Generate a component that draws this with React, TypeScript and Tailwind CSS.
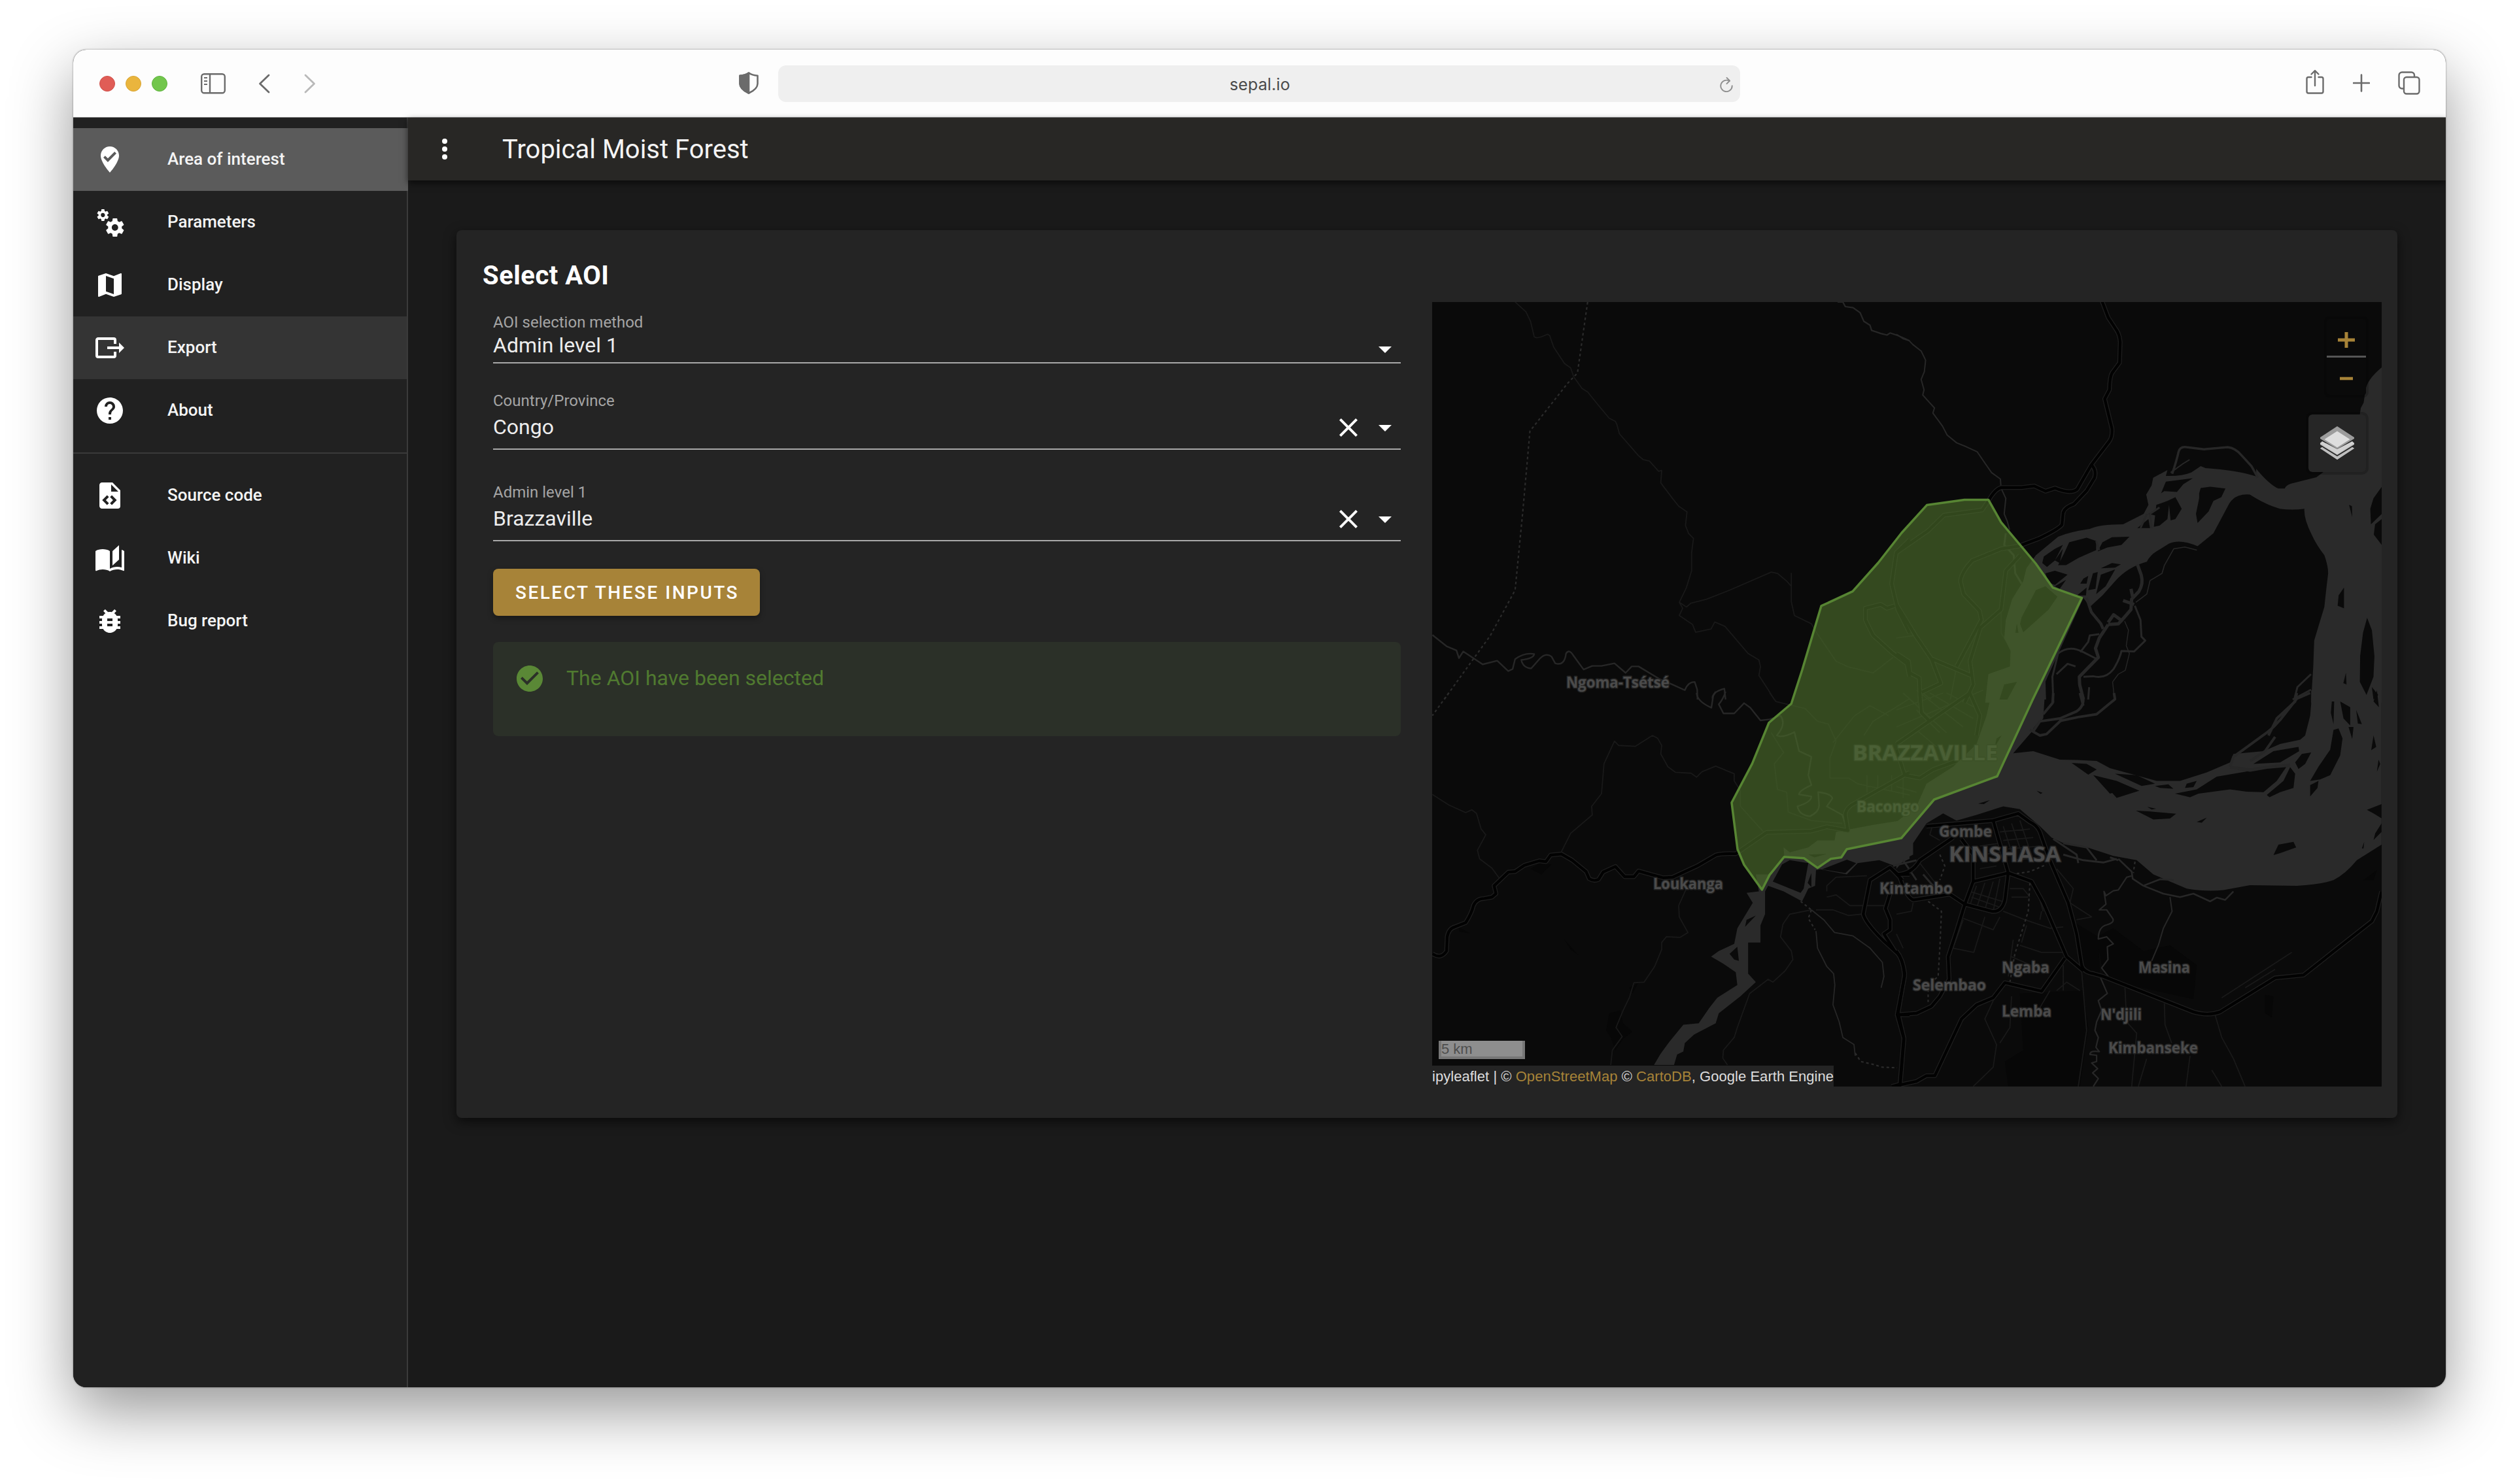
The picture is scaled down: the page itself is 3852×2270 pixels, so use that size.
import React from "react";

const ICONS = {
  marker:
    "M12,2C15.86,2 19,5.14 19,9C19,14.25 12,22 12,22C12,22 5,14.25 5,9C5,5.14 8.14,2 12,2M10.47,14L17,7.41L15.6,6L10.47,11.18L8.4,9.09L7,10.5L10.47,14Z",
  cogs:
    "M15.9,18.45C17.25,18.45 18.35,17.35 18.35,16C18.35,14.65 17.25,13.55 15.9,13.55C14.54,13.55 13.45,14.65 13.45,16C13.45,17.35 14.54,18.45 15.9,18.45M21.1,16.68L22.58,17.84C22.71,17.95 22.75,18.13 22.66,18.29L21.26,20.71C21.17,20.86 21,20.92 20.83,20.86L19.09,20.16C18.73,20.44 18.33,20.67 17.91,20.85L17.64,22.7C17.62,22.87 17.47,23 17.3,23H14.5C14.32,23 14.18,22.87 14.15,22.7L13.89,20.85C13.46,20.67 13.07,20.44 12.71,20.16L10.96,20.86C10.81,20.92 10.62,20.86 10.54,20.71L9.14,18.29C9.05,18.13 9.09,17.95 9.22,17.84L10.7,16.68L10.65,16L10.7,15.31L9.22,14.16C9.09,14.05 9.05,13.86 9.14,13.71L10.54,11.29C10.62,11.13 10.81,11.07 10.96,11.13L12.71,11.84C13.07,11.56 13.46,11.32 13.89,11.15L14.15,9.29C14.18,9.13 14.32,9 14.5,9H17.3C17.47,9 17.62,9.13 17.64,9.29L17.91,11.15C18.33,11.32 18.73,11.56 19.09,11.84L20.83,11.13C21,11.07 21.17,11.13 21.26,11.29L22.66,13.71C22.75,13.86 22.71,14.05 22.58,14.16L21.1,15.31L21.15,16L21.1,16.68M6.69,8.07C7.56,8.07 8.26,7.37 8.26,6.5C8.26,5.63 7.56,4.92 6.69,4.92A1.58,1.58 0 0,0 5.11,6.5C5.11,7.37 5.82,8.07 6.69,8.07M10.03,6.94L11,7.68C11.07,7.75 11.09,7.87 11.03,7.97L10.13,9.53C10.08,9.63 9.96,9.67 9.86,9.63L8.74,9.18L8,9.62L7.81,10.81C7.79,10.92 7.7,11 7.59,11H5.79C5.67,11 5.58,10.92 5.56,10.81L5.4,9.62L4.64,9.18L3.52,9.63C3.41,9.67 3.3,9.63 3.24,9.53L2.34,7.97C2.28,7.87 2.31,7.75 2.39,7.68L3.34,6.94L3.31,6.5L3.34,6.06L2.39,5.32C2.31,5.25 2.28,5.13 2.34,5.03L3.24,3.47C3.3,3.37 3.41,3.33 3.52,3.37L4.63,3.82L5.4,3.38L5.56,2.19C5.58,2.08 5.67,2 5.79,2H7.59C7.7,2 7.79,2.08 7.81,2.19L8,3.38L8.74,3.82L9.86,3.37C9.96,3.33 10.08,3.37 10.13,3.47L11.03,5.03C11.09,5.13 11.07,5.25 11,5.32L10.03,6.06L10.06,6.5L10.03,6.94Z",
  map: "M15,19L9,16.89V5L15,7.11M20.5,3C20.44,3 20.39,3 20.34,3L15,5.1L9,3L3.36,4.9C3.15,4.97 3,5.15 3,5.38V20.5A0.5,0.5 0 0,0 3.5,21C3.55,21 3.61,21 3.66,20.97L9,18.9L15,21L20.64,19.1C20.85,19 21,18.85 21,18.62V3.5A0.5,0.5 0 0,0 20.5,3Z",
  exportIcon:
    "M23,12L19,8V11H10V13H19V16M1,18V6C1,4.89 1.9,4 3,4H15A2,2 0 0,1 17,6V9H15V6H3V18H15V15H17V18A2,2 0 0,1 15,20H3A2,2 0 0,1 1,18Z",
  help: "M15.07,11.25L14.17,12.17C13.45,12.89 13,13.5 13,15H11V14.5C11,13.39 11.45,12.39 12.17,11.67L13.41,10.41C13.78,10.05 14,9.55 14,9C14,7.89 13.1,7 12,7A2,2 0 0,0 10,9H8A4,4 0 0,1 12,5A4,4 0 0,1 16,9C16,9.88 15.64,10.67 15.07,11.25M13,19H11V17H13M12,2A10,10 0 0,0 2,12A10,10 0 0,0 12,22A10,10 0 0,0 22,12C22,6.47 17.5,2 12,2Z",
  fileCode:
    "M13,9H18.5L13,3.5V9M6,2H14L20,8V20A2,2 0 0,1 18,22H6C4.89,22 4,21.1 4,20V4C4,2.89 4.89,2 6,2M6.12,15.5L9.86,19.24L11.28,17.83L8.95,15.5L11.28,13.17L9.86,11.76L6.12,15.5M17.28,15.5L13.54,11.76L12.12,13.17L14.45,15.5L12.12,17.83L13.54,19.24L17.28,15.5Z",
  book: "M19 2L14 6.5V17.5L19 13V2M6.5 5C4.55 5 2.45 5.4 1 6.5V21.16C1 21.41 1.25 21.66 1.5 21.66C1.6 21.66 1.65 21.59 1.75 21.59C3.1 20.94 5.05 20.5 6.5 20.5C8.45 20.5 10.55 20.9 12 22C13.35 21.15 15.8 20.5 17.5 20.5C19.15 20.5 20.85 20.81 22.25 21.56C22.35 21.61 22.4 21.59 22.5 21.59C22.75 21.59 23 21.34 23 21.09V6.5C22.4 6.05 21.75 5.75 21 5.5V19C19.9 18.65 18.7 18.5 17.5 18.5C15.8 18.5 13.35 19.15 12 20V6.5C10.55 5.4 8.45 5 6.5 5Z",
  bug: "M14,12H10V10H14M14,16H10V14H14M20,8H17.19C16.74,7.22 16.12,6.55 15.37,6.04L17,4.41L15.59,3L13.42,5.17C12.96,5.06 12.5,5 12,5C11.5,5 11.04,5.06 10.59,5.17L8.41,3L7,4.41L8.62,6.04C7.88,6.55 7.26,7.22 6.81,8H4V10H6.09C6.04,10.33 6,10.66 6,11V12H4V14H6V15C6,15.34 6.04,15.67 6.09,16H4V18H6.81C7.85,19.79 9.78,21 12,21C14.22,21 16.15,19.79 17.19,18H20V16H17.91C17.96,15.67 18,15.34 18,15V14H20V12H18V11C18,10.66 17.96,10.33 17.91,10H20V8Z",
  check:
    "M12 2C6.5 2 2 6.5 2 12S6.5 22 12 22 22 17.5 22 12 17.5 2 12 2M10 17L5 12L6.41 10.59L10 14.17L17.59 6.58L19 8L10 17Z",
  close:
    "M19,6.41L17.59,5L12,10.59L6.41,5L5,6.41L10.59,12L5,17.59L6.41,19L12,13.41L17.59,19L19,17.59L13.41,12L19,6.41Z",
  menuDown: "M7,10L12,15L17,10H7Z",
  dots: "M12,16A2,2 0 0,1 14,18A2,2 0 0,1 12,20A2,2 0 0,1 10,18A2,2 0 0,1 12,16M12,10A2,2 0 0,1 14,12A2,2 0 0,1 12,14A2,2 0 0,1 10,12A2,2 0 0,1 12,10M12,4A2,2 0 0,1 14,6A2,2 0 0,1 12,8A2,2 0 0,1 10,6A2,2 0 0,1 12,4Z",
};

function Icon({ d, className = "" }: { d: string; className?: string }) {
  return (
    <svg viewBox="0 0 24 24" className={`size-12 shrink-0 fill-current ${className}`}>
      <path d={d} fillRule="evenodd" />
    </svg>
  );
}

/* ---------- Browser toolbar ---------- */

function Toolbar() {
  return (
    <div className="grid h-26 shrink-0 grid-cols-[1018px_60px_1471px_1fr] items-center border-b border-[#8a8a8a] bg-[#fdfdfd] text-[#6b6b6b]">
      <div className="flex items-center pl-10">
        <div className="flex gap-4">
          <span className="size-6 rounded-full border border-[#d0504b] bg-[#e05d56]" />
          <span className="size-6 rounded-full border border-[#d9a534] bg-[#eab53d]" />
          <span className="size-6 rounded-full border border-[#5fb33f] bg-[#72c64c]" />
        </div>
        <svg viewBox="0 0 38 32" className="ml-[51px] h-8 w-[38px]" fill="none" stroke="currentColor" strokeWidth="2.4">
          <rect x="1.2" y="1.2" width="35.6" height="29" rx="4" />
          <path d="M14 1v29" />
          <path d="M5 7h5M5 12h5M5 17h5" strokeWidth="2" />
        </svg>
        <svg viewBox="0 0 18 30" className="ml-[50px] h-[30px] w-[18px]" fill="none" stroke="currentColor" strokeWidth="2.8" strokeLinecap="round" strokeLinejoin="round">
          <path d="M16 2L2.5 15 16 28" />
        </svg>
        <svg viewBox="0 0 18 30" className="ml-[52px] h-[30px] w-[18px] text-[#b9b9b9]" fill="none" stroke="currentColor" strokeWidth="2.8" strokeLinecap="round" strokeLinejoin="round">
          <path d="M2 2l13.500 13L2 28" />
        </svg>
      </div>
      <svg viewBox="0 0 30 34" className="h-[34px] w-[30px] -translate-y-px" fill="none" stroke="currentColor" strokeWidth="2.6" strokeLinejoin="round">
        <path d="M15 1.500C11 4.500 6 5.500 1.500 5.800V18c0 7 7 11.500 13.500 14.500C21.500 29.500 28.500 25 28.500 18V5.800C24 5.500 19 4.500 15 1.500z" />
        <path d="M15 1.500v31C8.500 29.500 1.500 25 1.500 18V5.800C6 5.500 11 4.500 15 1.500z" fill="currentColor" />
      </svg>
      <div className="grid h-14 grid-cols-[1fr_auto_1fr] items-center rounded-xl bg-[#efefef] px-2.5">
        <span />
        <span className="pt-0.5 pl-0.5 font-[Inter] text-[25px] leading-8 tracking-[0.1px] text-[#4b4b4b]">sepal.io</span>
        <svg viewBox="0 0 24 26" className="mt-0.5 h-6 w-[22px] justify-self-end text-[#8e8e8e]" fill="none" stroke="currentColor" strokeWidth="2.100" strokeLinecap="round" strokeLinejoin="round">
          <path d="M17 7.500A9.500 9.500 0 1 0 21.500 15.500" />
          <path d="M12.500 2l5 5-5 5" />
        </svg>
      </div>
      <div className="flex items-center justify-end pr-[39px]">
        <svg viewBox="0 0 28 38" className="h-[38px] w-7 -translate-y-[3px]" fill="none" stroke="currentColor" strokeWidth="2.4" strokeLinecap="round" strokeLinejoin="round">
          <path d="M8.500 12H4a2.500 2.500 0 0 0-2.500 2.500V34A2.500 2.500 0 0 0 4 36.500h20a2.500 2.500 0 0 0 2.500-2.500V14.500A2.500 2.500 0 0 0 24 12h-4.500M14 25V2.500M8.500 7.500L14 2l5.500 5.500" />
        </svg>
        <svg viewBox="0 0 26 28" className="ml-11 h-7 w-[26px] -translate-y-px" fill="none" stroke="currentColor" strokeWidth="2.6" strokeLinecap="round">
          <path d="M13 1.500v25M1 14h24" />
        </svg>
        <svg viewBox="0 0 34 36" className="ml-[43px] h-9 w-[34px] -translate-y-px" fill="none" stroke="currentColor" strokeWidth="2.4" strokeLinejoin="round">
          <rect x="9" y="9" width="23.500" height="25.500" rx="4" />
          <path d="M9 26.500H6a4.500 4.500 0 0 1-4.500-4.500V6A4.500 4.500 0 0 1 6 1.500h14.500A4.500 4.500 0 0 1 25 6v3" />
        </svg>
      </div>
    </div>
  );
}

/* ---------- Sidebar ---------- */

function NavItem({ icon, label, tone = "" }: { icon: string; label: string; tone?: string }) {
  return (
    <div className={`flex h-24 items-center gap-16 pl-8 ${tone}`}>
      <Icon d={icon} />
      <span className="pb-0.5 text-[26px] leading-8 font-medium text-[#f4f4f4]">{label}</span>
    </div>
  );
}

function Sidebar() {
  return (
    <nav className="w-[512px] shrink-0 border-r-2 border-[#3a3a3a] bg-[#212121] pt-4">
      <NavItem icon={ICONS.marker} label="Area of interest" tone="bg-[#5b5b5b] -mr-0.5" />
      <NavItem icon={ICONS.cogs} label="Parameters" />
      <NavItem icon={ICONS.map} label="Display" />
      <NavItem icon={ICONS.exportIcon} label="Export" tone="bg-[#343434]" />
      <NavItem icon={ICONS.help} label="About" />
      <div className="my-4 h-0.5 bg-[#3a3a3a]" />
      <NavItem icon={ICONS.fileCode} label="Source code" />
      <NavItem icon={ICONS.book} label="Wiki" />
      <NavItem icon={ICONS.bug} label="Bug report" />
    </nav>
  );
}

/* ---------- Form ---------- */

function Clearable() {
  return (
    <div className="flex gap-2">
      <Icon d={ICONS.close} />
      <Icon d={ICONS.menuDown} />
    </div>
  );
}

function AoiForm() {
  return (
    <div className="flex w-[1388px] flex-col pt-4">
      <div className="flex h-[78px] flex-col border-b-2 border-[#a9a9a9]">
        <span className="mt-px h-7 text-2xl leading-7 text-[#a5a5a5]">AOI selection method</span>
        <div className="mt-px flex h-10 items-center justify-between">
          <span className="text-[32px] leading-10 text-[#ededed]">Admin level 1</span>
          <Icon d={ICONS.menuDown} className="mt-3" />
        </div>
      </div>
      <div className="mt-[42px] flex h-[90px] flex-col border-b-2 border-[#a9a9a9]">
        <span className="mt-px h-7 text-2xl leading-7 text-[#a5a5a5]">Country/Province</span>
        <div className="mt-[3px] flex h-12 items-center justify-between">
          <span className="pb-0.5 text-[32px] leading-10 text-[#ededed]">Congo</span>
          <Clearable />
        </div>
      </div>
      <div className="mt-[50px] flex h-[90px] flex-col border-b-2 border-[#a9a9a9]">
        <span className="mt-px h-7 text-2xl leading-7 text-[#a5a5a5]">Admin level 1</span>
        <div className="mt-[3px] flex h-12 items-center justify-between">
          <span className="pb-0.5 text-[32px] leading-10 text-[#ededed]">Brazzaville</span>
          <Clearable />
        </div>
      </div>
      <button className="mt-[42px] flex h-18 w-[408px] items-center justify-center rounded-lg bg-[#a78338] pt-0.5 pl-0.5 text-[28px] font-medium tracking-[2.5px] text-white shadow-[0_4px_8px_rgba(0,0,0,0.35)]">
        SELECT THESE INPUTS
      </button>
      <div className="mt-10 flex h-36 gap-8 rounded-lg bg-[#2b3028] px-8 pt-8">
        <Icon d={ICONS.check} className="text-[#5a8836]" />
        <span className="-mt-px text-[32px] leading-12 text-[#507a30]">The AOI have been selected</span>
      </div>
    </div>
  );
}

/* ---------- Map ---------- */

/* The map artwork is split in four sheets, each with its own grid. */
const SHEETS = {
  nw: "translate(2180 450) scale(0.47194 0.39541)",
  ne: "translate(2900 450) scale(0.48469 0.39541)",
  sw: "translate(2180 1060) scale(0.47194 0.43367)",
  se: "translate(2900 1060) scale(0.5102 0.43367)",
} as const;

type Sheet = keyof typeof SHEETS;

const WATER: [Sheet, string][] = [
  [
    "ne",
    "M1531 283Q1485 330 1480 370L1474 420 1465 440 1462 465 1400 640 1345 690 1325 708 1245 733Q1228 740 1225 752H1205Q1175 735 1135 675L1135 705Q1090 685 1000 675L975 673 960 665 930 690Q900 705 850 703L855 680 810 710 805 740 788 775 795 815 780 850 715 890Q640 890 610 908 545 920 510 938L440 1010 410 1060 400 1110 365 1180 345 1260 340 1330 360 1380 358 1440 290 1470 280 1580H440L590 1175 610 1210 650 1165 690 1110Q730 1055 790 1035 800 1010 820 995L860 965Q895 945 950 975L1000 925 1050 810Q1070 770 1115 775 1165 815 1210 830 1250 837 1287 830 1285 870 1310 930 1325 970 1350 1010 1362 1050 1362 1080 1355 1150 1350 1210 1330 1290 1318 1340L1315 1440 1308 1580H1531Z",
  ],
  ["ne", "M440 1568L470 1490 472 1568Z"],
  [
    "se",
    "M285 0L270 80 240 180 170 260 90 320 60 400 0 455V620L25 585 50 570 50 530 90 460 140 425 180 450 240 430 320 400 370 410 430 470 465 510 500 530 560 540 650 575 720 590 770 640 870 690Q930 702 980 695L1060 678 1200 680Q1270 676 1310 660 1345 640 1380 590L1454 535V-10H1243V40L1240 80 1225 150 1210 165 1150 180 1100 205 1010 215 1000 245 930 280 850 310 780 310 640 265 600 240Q540 235 490 235L410 205 350 213 440 90 445 0Z",
  ],
  [
    "sw",
    "M1162 578L1160 545 1180 562 1240 545 1270 520 1325 520 1330 490 1450 465 1568 445V585L1520 610 1470 590 1400 600 1365 640 1280 622 1265 625 1262 680 1240 690 1220 735 1160 700 1110 680 1100 700 1100 780 1085 820 1085 880 1045 880 1045 990 1070 1020 1020 1070 950 1130 940 1165 870 1205 840 1235 835 1265 815 1275 805 1312H740L760 1275 790 1230 835 1170 885 1165 920 1110 945 1075 1010 1030 1005 985 965 955 925 930 950 910 1000 885 1010 830 1060 740 1040 705 1080 700 1070 640H1110Z",
  ],
];

const ISLANDS: [Sheet, string][] = [
  [
    "ne",
    "M850 725L935 712 905 735 885 765 845 762 835 770ZM795 850L825 830 830 860ZM820 815L855 800 880 785 900 830 880 870 865 875 860 815 855 870 830 895 812 900ZM795 870L800 905H760ZM955 770L960 750 990 745 1038 752 1025 785 1000 800 985 840 950 885 945 850 955 790ZM545 960L600 942 630 955V990L575 1020 535 1048 510 1048 530 1000ZM650 960L680 940 735 938 710 970 665 980 635 995ZM460 1040L465 1015 500 985 525 970 500 1030 475 1055ZM500 1030L525 985 515 1040ZM645 1060L680 1040 708 1045 690 1058ZM470 1080L500 1070 540 1085 500 1125 480 1115ZM500 1130L535 1105 515 1140ZM590 1100L605 1090 600 1120 580 1120ZM620 1080L635 1075 628 1140 605 1145ZM645 1085L690 1065 660 1130 630 1160ZM570 1165L600 1135 598 1165ZM390 1275L395 1250 440 1145 470 1130 508 1170 480 1220 400 1308ZM380 1275L385 1310 375 1310ZM1531 745L1505 790 1495 830 1497 890 1531 850ZM1531 870L1510 890 1506 930 1531 970ZM1428 815L1437 820 1438 862ZM1395 1165L1412 1135V1215L1392 1205ZM1485 1252L1500 1300 1508 1400 1505 1480 1483 1550 1462 1500 1463 1400 1472 1310ZM1500 1520L1520 1550 1505 1568ZM1418 1465L1420 1510 1410 1505ZM340 1510L380 1500 350 1568H325Z",
  ],
  [
    "se",
    "M525 247L570 250 600 270 575 288ZM590 290L660 310 728 345 660 370 615 310 655 350 640 355ZM655 285L720 290 775 320 735 328ZM775 328L815 322 830 338 790 335ZM870 320L900 310 890 332 865 335ZM835 355L900 340 960 295 1060 275 1110 265 1170 258 1140 310 1100 350 1050 348 1000 340 905 355 880 368ZM1070 250L1130 205 1205 190 1207 205 1150 245ZM1180 262L1195 285 1190 335 1150 350 1118 368 1110 360 1160 310ZM1195 245L1215 215 1243 210 1225 250 1205 268ZM1310 130L1325 125 1337 160 1330 220 1300 290 1270 305 1240 310 1265 260 1300 200ZM1240 325L1265 310 1262 335 1240 365ZM1305 30L1312 30 1310 110 1302 70ZM1330 30L1360 50V115L1340 90ZM1378 60L1395 110 1383 108ZM1355 120L1370 120 1366 162ZM1430 150L1438 190 1423 202ZM1440 -10L1446 50 1430 30ZM1445 235L1450 250 1440 278ZM718 415L760 418 838 426 820 443 770 446ZM752 402L778 408 765 411ZM900 455L930 440 915 458ZM1130 572L1145 535 1190 525 1198 545 1150 565ZM1410 412L1454 392V442L1430 425ZM1430 518L1435 495 1454 460V490ZM1395 548L1402 525 1400 548ZM245 390L280 378 262 392ZM420 345L438 352 432 356ZM410 125L432 95 480 92 450 135 430 140ZM300 160L315 150 295 190Z",
  ],
  [
    "sw",
    "M1155 605L1180 590 1240 600 1225 690 1215 705 1125 665ZM1035 825L1040 800 1070 785ZM985 920L1010 895 1015 945 1000 940ZM1285 622L1365 588 1395 600 1360 635ZM1238 670L1250 635V685ZM1240 570L1300 568 1260 580Z",
  ],
];

const STREAMS: [Sheet, string, number][] = [
  ["ne", "M870 695Q885 640 890 610 895 588 915 592L970 600 1045 592Q1070 595 1090 625L1120 665 1140 710", 3.5],
  ["ne", "M865 690L905 655 925 640", 2],
  ["ne", "M760 1045L772 1085Q780 1120 765 1150L742 1180 740 1220 712 1260 700 1275 668 1278", 5],
  ["ne", "M715 1185L750 1200M740 1140L745 1170M668 1270L685 1240 710 1262M668 1278L640 1330 628 1370 637 1405 605 1445 577 1480 578 1510 590 1568", 5],
  ["ne", "M600 1175L615 1230 645 1275 652 1295", 4.5],
  ["ne", "M590 1480L620 1478Q660 1490 685 1450 705 1410 710 1380L750 1382 785 1340 773 1325 770 1260 752 1205", 3],
  ["ne", "M495 1580L492 1480 510 1390Q545 1355 590 1385L630 1410M505 1470L540 1430 565 1440M580 1385L605 1345 610 1320 640 1315M608 1520L605 1568", 3],
  ["ne", "M720 1265L732 1300 725 1360 735 1390 722 1455 700 1470 682 1500 688 1568", 1.4],
  ["ne", "M948 990L910 978 875 985 845 1050 838 1080 800 1108 790 1160 755 1192", 1.6],
  ["ne", "M0 155L20 172 40 180 52 195 78 220 92 255 88 300 78 330 87 370 83 390 105 420 120 440 115 460 145 510 160 545 190 575 220 590 255 610 280 655 300 690 328 715 330 750 345 790 340 850 350 880 357 912", 2],
  ["ne", "M345 925L340 970 370 1010 375 1080 395 1120M1308 1470L1265 1520 1255 1568M1308 1530L1250 1568", 3],
  ["ne", "M805 905L800 850 830 825M640 990L630 955M770 905L790 850", 3],
  ["nw", "M1335 30L1352 30 1360 48 1385 52 1408 72 1420 105 1440 120 1445 140 1475 152 1495 158 1505 150 1530 160 1550 170 1568 180", 2.2],
  ["nw", "M22 1318L68 1362 100 1378 108 1408 122 1382 185 1432 232 1418 268 1458 282 1450 290 1412Q320 1385 352 1392 350 1410 310 1415 315 1445 342 1448L370 1410Q390 1385 408 1402L420 1428Q450 1440 455 1390 465 1370 480 1400L512 1452 540 1438 570 1438 612 1428 648 1465 668 1440H690L760 1490 800 1510 840 1532Q850 1500 872 1500L880 1530 881 1568", 2.4],
  ["nw", "M930 1568Q925 1540 968 1526L972 1568", 2.4],
  ["sw", "M878 0Q880 30 926 52L932 10 940 -5M972 -5Q965 20 950 40L965 72H1000L1032 36 1052 52 1085 97 1115 93 1150 80Q1170 110 1138 150 1155 160 1195 138L1210 205 1250 225 1240 290 1250 325Q1210 345 1210 358L1250 365Q1250 385 1205 400 1210 430 1245 435 1275 420 1275 395L1272 350Q1315 355 1318 372L1300 400 1350 430 1365 480", 2.4],
  ["sw", "M1250 765L1290 800 1325 845 1385 857 1440 900 1480 950 1485 1000 1476 1040M1265 840L1270 900 1300 965 1322 990 1326 1030 1320 1100 1340 1160 1352 1215 1388 1240 1392 1280", 1.8],
  ["se", "M-10 610L60 590M20 590L60 660M80 640L110 680M500 570L560 590 620 598 660 585M470 515L540 570 545 600M500 530L570 545 600 590M640 580L665 590", 3],
  ["se", "M665 585L705 630 708 655 740 680 800 708 850 720 890 708 940 735 960 722 985 730 1010 700M740 680L790 657 830 660", 2.6],
  ["se", "M705 645L690 650 665 695 650 698 628 715 622 700 628 745 608 765 630 765 648 795Q655 810 630 818 605 825 605 868L630 860 650 885 632 895 634 940 615 970 635 1000M612 1005L632 1060 605 1085 615 1120 600 1160 595 1190 605 1215 598 1250 608 1265Q580 1260 580 1275L600 1278 600 1300 585 1305 603 1325 588 1340 605 1360 590 1388", 2.2],
  ["se", "M820 720L826 770 800 830 785 890 765 945", 2],
  ["se", "M1240 0L1200 20 1150 95 1130 120 1110 140 1040 200 1010 225 1000 260M1200 0L1195 30 1140 90 1115 150M1135 155L1105 205 1060 240", 4],
  ["se", "M1000 262L1060 272 1110 262 1180 255", 5],
  ["se", "M470 0L468 35 440 75M555 0Q570 40 540 65L490 90 430 100 410 135M550 0L560 45M400 130L430 150 450 145 492 98 545 85 600 75 655 22 652 0", 4],
];

const TRACKS: [Sheet, string][] = [
  ["nw", "M290 30L325 68 340 105 352 165Q360 175 395 155L402 160 415 205 450 268 470 285 480 320 507 365 525 378 560 430 595 480 615 492 620 505 628 540 690 625 705 640 725 645 755 685 765 682 762 730 800 790 820 820 847 842 842 895 852 925 868 945 862 1000 862 1070 845 1135 822 1192 845 1210 860 1195 910 1180 985 1145 1120 1075 1140 1080 1170 1110 1185 1130V1078M1185 1130V1190L1195 1243 1250 1275 1270 1315 1330 1420 1370 1442 1450 1465 1515 1405M822 1192L833 1215 822 1243 865 1278 875 1308 925 1295 937 1268 970 1285 1045 1390 1080 1415 1085 1440 1080 1475 1110 1530 1130 1568"],
  ["sw", "M22 358L75 395 130 422 150 412 165 425 180 480 195 500 168 555 175 585 215 618 240 655M440 560L470 495 540 430 538 400 570 355 578 250 612 170 625 185 680 188 735 150 752 160 765 185 762 215 785 260 810 280 860 283 878 297 895 278 940 258 1000 285 1000 310 1020 345 1020 400 1095 490M845 690L820 750 822 790 850 845 825 862 780 860 765 880 765 905 742 965 708 1020 675 1022 660 1075 640 1120 617 1180 637 1212 605 1260 600 1312M1250 765L1180 780 1158 815 1150 860 1185 910 1190 940 1165 980 1125 1020 1110 1010 1050 1060 1010 1180 1000 1215 965 1260 963 1288 978 1312M1115 0L1135 30 1230 55 1270 100 1305 110 1330 170 1310 230V300H1370L1400 320 1568 360M1120 140L1160 210 1130 250 1140 340 1170 350 1175 420 1250 450 1350 460M1265 765L1320 765 1370 785 1415 780M1300 720L1330 712 1375 750H1500M1320 175L1390 80 1440 45 1500 80M1420 150L1450 100 1568 20M1430 290V350M1465 290V350M1510 290V345M1300 700V680L1330 650 1430 645"],
  ["ne", "M330 1220L330 1310 355 1360M0 1330L60 1320M80 1540L110 1568M190 1440L170 1568"],
  ["se", "M200 795L290 835 310 790M200 800L170 900 232 915 265 790M220 700L330 740M225 720L320 760M240 680L220 750M265 670L240 760M290 665L265 765M310 655L290 770M250 620L300 610M340 690L380 690 400 720M345 720L395 720M320 770L385 800 460 830 500 825M390 820L375 880M370 890L435 915H500M345 930L440 980M350 870L335 1000M480 1050L510 1020 550 1050M430 1110L460 1050M345 1070L340 1180 310 1235M300 1060L265 1150 300 1240 290 1320 230 1388M555 980L570 1190 545 1388M685 1040L690 1160 720 1200 705 1388M803 1095L805 1170 825 1235M955 1135L975 1215 1010 1290 1045 1388M880 1280L868 1388M750 1290L725 1388M945 1330L975 1388M320 470L345 560M345 460L380 580M370 450L410 590M310 490L400 480M320 520L410 510M335 550L430 540M345 590L440 580M250 540L310 530M260 570L320 560M480 620L530 690 520 740 585 790 540 800M435 770L430 800M420 690L440 770M500 960V1050M110 460L100 500 130 520M70 600L110 660 140 700M0 780L45 770 50 740M0 850L20 900"],
  ["se", "M0 60L140 0M0 120L260 -10M20 0L150 140M60 -10L200 120M100 0L230 90M0 170L60 130 120 190M60 60L130 140M150 0L250 60M0 330L60 350M20 300V370"],
  ["se", "M975 1075L1185 915M1045 1040L1135 975"],
];

const DOTTED: [Sheet, string][] = [
  ["nw", "M525 30L492 305 460 345 338 530 315 840 290 1145 210 1320 60 1568"],
  ["sw", "M75 0L22 80M1215 735L1250 765M1250 765L1240 795 1262 835M1392 1270L1410 1300 1450 1310 1480 1320 1528 1322"],
  ["se", "M130 570L145 610 130 660M95 735L135 770 130 900 125 1000 95 1030V1090M400 670L395 770 355 920 340 1020M715 595L710 635M345 640L400 630 450 605"],
];

const ROADS: [Sheet, string][] = [
  ["ne", "M648 25L668 90 695 140Q705 160 706 185L704 265 680 305Q673 320 672 370L657 405 680 520Q682 550 672 568L615 660 570 755Q550 775 500 750L470 762 435 742 395 748 330 748Q310 755 290 800L270 835 150 855 100 915 0 1000"],
  ["ne", "M615 660Q632 680 625 710L600 760 560 812Q530 825 526 845L522 892Q510 910 450 945L385 975 330 985 240 1030Q205 1075 202 1110L212 1160 262 1225 268 1260 190 1440"],
  ["ne", "M390 1010L345 1070 330 1220 265 1290 232 1420 242 1510 215 1580M0 1200L60 1320 110 1410 140 1505 80 1540M110 1410L235 1475M0 1390L38 1420 42 1465 72 1485 75 1580"],
  ["nw", "M1568 950L1525 1000 1510 1120 1530 1220 1568 1310M1520 1205L1495 1215 1475 1200 1425 1215V1260L1450 1320 1510 1385 1560 1430 1568 1480"],
  ["sw", "M22 920Q50 940 68 910L70 860Q75 830 95 825L130 810Q150 775 155 750 165 725 190 725L215 720 228 708 222 680 268 632 290 630 320 608 368 592 390 595 405 572 440 568 475 590 520 630 530 655Q545 665 560 658L575 632 615 612 645 648H675L690 628 730 640 770 652 800 650 880 610 940 572Q955 565 1005 567L1105 492 1250 487 1300 472 1368 485 1360 430Q1360 410 1380 395L1568 280"],
  ["sw", "M1568 640L1530 640 1505 615 1440 660 1418 780Q1425 810 1480 870L1530 920Q1548 945 1552 1000L1528 1135 1550 1220 1538 1380 1510 1388M1510 690L1490 760 1505 800V835L1485 850 1520 910M1505 615L1545 660M1528 1135H1568"],
  ["se", "M0 640Q45 640 70 590L170 510M90 470L290 450 365 425 400 455Q420 465 430 490L460 590 515 740 540 850 555 960Q560 985 590 990L620 1000 890 1125Q935 1140 970 1125L1135 1005 1220 995 1425 805 1440 770 1454 700"],
  ["se", "M195 515L230 570V665M230 665L335 635 405 665 440 740 510 930 560 980M230 665L205 745 180 840 155 930 158 1010 130 1070 105 1105 60 1130 0 1135M290 450L335 635 325 730Q315 775 285 770L205 745 160 710 50 730Q30 720 10 650"],
  ["se", "M505 935L435 1052 325 1022 290 1075 240 1100 195 1150 115 1350 90 1350 60 1370 0 1385M0 910Q20 940 25 990L5 1130 22 1215 10 1388M0 200L25 290 70 300 110 270 180 240M0 180L220 0M70 0L75 70 100 100M220 0L250 80 240 150"],
];

const PARKS: [Sheet, string][] = [
  ["sw", "M340 620L370 600 408 605 375 640ZM105 825L145 848 110 842ZM595 1130L630 1120 640 1165 670 1195 640 1220 615 1260 600 1215 585 1190ZM450 870L495 925 470 905ZM660 1040L690 1022 670 1060Z"],
  ["se", "M370 1060L560 1050 575 1180 550 1388H335L325 1300 380 1260ZM600 860L650 830 740 910 820 890 900 960 890 1080 700 1030 620 990ZM1105 1065L1130 1070 1125 1145 1105 1130ZM1400 660L1440 625 1430 660ZM520 800L605 860 610 1000 560 960Z"],
];

type Label = { t: string; x: number; y: number; w: number; city?: boolean };
const LABELS: Label[] = [
  { t: "Ngoma-Tsétsé", x: 2395, y: 1052, w: 158 },
  { t: "Loukanga", x: 2528, y: 1360, w: 107 },
  { t: "BRAZZAVILLE", x: 2833, y: 1163, w: 222, city: true },
  { t: "Bacongo", x: 2839, y: 1242, w: 96 },
  { t: "Gombe", x: 2965, y: 1280, w: 81 },
  { t: "KINSHASA", x: 2980, y: 1318, w: 171, city: true },
  { t: "Kintambo", x: 2874, y: 1367, w: 112 },
  { t: "Ngaba", x: 3061, y: 1488, w: 73 },
  { t: "Masina", x: 3270, y: 1488, w: 79 },
  { t: "Selembao", x: 2925, y: 1515, w: 112 },
  { t: "Lemba", x: 3061, y: 1555, w: 76 },
  { t: "N'djili", x: 3212, y: 1560, w: 63 },
  { t: "Kimbanseke", x: 3224, y: 1611, w: 137 },
];

function MapArtwork() {
  const noScale = { vectorEffect: "non-scaling-stroke" as const, fill: "none" as const };
  return (
    <svg viewBox="2190 462 1452 1200" className="block h-full w-full" strokeLinejoin="round">
      <rect x="2190" y="462" width="1452" height="1200" fill="#0a0a0a" />
      {PARKS.map(([s, d], i) => (
        <path key={i} d={d} transform={SHEETS[s]} fill="#070707" />
      ))}
      {TRACKS.map(([s, d], i) => (
        <path key={i} d={d} transform={SHEETS[s]} stroke="#191919" strokeWidth="1.8" {...noScale} />
      ))}
      {WATER.map(([s, d], i) => (
        <path key={i} d={d} transform={SHEETS[s]} fill="#2a2a2a" />
      ))}
      {ISLANDS.map(([s, d], i) => (
        <path key={i} d={d} transform={SHEETS[s]} fill="#0a0a0a" />
      ))}
      {STREAMS.map(([s, d, w], i) => (
        <path key={i} d={d} transform={SHEETS[s]} stroke="#272727" strokeWidth={w} {...noScale} />
      ))}
      {DOTTED.map(([s, d], i) => (
        <path key={i} d={d} transform={SHEETS[s]} stroke="#2b2b2b" strokeWidth="2.2" strokeDasharray="4 4" {...noScale} />
      ))}
      {ROADS.map(([s, d], i) => (
        <path key={i} d={d} transform={SHEETS[s]} stroke="#1e1e1e" strokeWidth="7" {...noScale} />
      ))}
      {ROADS.map(([s, d], i) => (
        <path key={i} d={d} transform={SHEETS[s]} stroke="#020202" strokeWidth="4.400" {...noScale} />
      ))}
      {LABELS.map((l) => (
        <text
          key={l.t}
          x={l.x}
          y={l.y}
          textLength={l.w}
          lengthAdjust="spacingAndGlyphs"
          fill="#4b4b4b"
          stroke="#222222"
          strokeWidth="3"
          paintOrder="stroke"
          className={l.city ? "font-['Open_Sans'] text-[32px] font-bold" : "font-['Open_Sans'] text-[24px] font-bold"}
        >
          {l.t}
        </text>
      ))}
      <path
        d="M2946.500 772.600L3004 764.400H3040.600L3060 798.800 3113 862 3139 898.800 3183.500 914.600 3108.400 1070 3054 1187.500 2957.700 1223 2907.500 1282 2824 1299 2815.700 1311.500 2799.600 1313.700 2779.400 1327.600 2758.600 1312.800 2728.400 1310.700 2706 1338.400 2694.400 1361 2667 1322.800 2657 1299 2648 1227.800 2679.300 1168.400 2705 1105.500 2739.200 1076.500 2755.800 1025 2785 926.900 2833 904.700 2872 861 2908 815Z"
        fill="#4b6b2b"
        fillOpacity="0.66"
        stroke="#578533"
        strokeWidth="3.500"
      />
    </svg>
  );
}

function MapPanel() {
  return (
    <div className="relative h-[1200px] w-[1452px] shrink-0 overflow-hidden">
      <MapArtwork />
      <div className="absolute top-[22px] right-5 flex flex-col gap-[22px]">
        <div className="flex h-[124px] w-[68px] flex-col self-end rounded-lg border-4 border-black/20 bg-[#0a0a0a] bg-clip-padding text-[#a78338]">
          <div className="flex h-[59px] items-center justify-center border-b-3 border-[#555555] pt-2">
            <svg viewBox="0 0 26 26" className="size-[26px]" stroke="currentColor" strokeWidth="5">
              <path d="M13 1v24M0 13h26" />
            </svg>
          </div>
          <div className="flex h-[57px] items-center justify-center pt-1.5">
            <svg viewBox="0 0 20 6" className="h-1.5 w-5" stroke="currentColor" strokeWidth="4.600">
              <path d="M0 3h20" />
            </svg>
          </div>
        </div>
        <div className="flex size-24 items-center justify-center rounded-[10px] border-4 border-black/20 bg-[#262626] bg-clip-padding">
          <svg viewBox="0 0 52 52" className="size-[52px]">
            <path d="M3 32L26 48 49 32 52 34 26 51 0 34Z" fill="#bebebe" />
            <path d="M0 25L26 42 52 25V28L26 44 0 28ZM3 32L26 46 49 32 52 33.500 26 51 0 33.500Z" fill="#bebebe" />
            <path d="M3 23L26 35 49 23 52 26 26 43 0 26Z" fill="#d2d2d2" />
            <path d="M26 0L52 17V19L26 35 0 19V17Z" fill="#9c9c9c" />
            <path d="M26 7.500L45.500 20 26 32.500 6.500 20Z" fill="#dedede" />
          </svg>
        </div>
      </div>
      <div className="absolute bottom-0 left-0 flex flex-col items-start">
        <div className="mb-2.5 ml-2.5 h-7 w-[132px] border-4 border-t-0 border-[#777777] bg-[#8e8e8e] font-['Liberation_Sans'] text-[22px] leading-[25px] text-[#4d4d4d]">
          5 km
        </div>
        <div className="h-8 bg-[#242424] font-['Liberation_Sans'] text-[22px] leading-[33px] tracking-[0.04px] whitespace-nowrap text-[#dddddd]">
          ipyleaflet | © <span className="text-[#a78338]">OpenStreetMap</span> © <span className="text-[#a78338]">CartoDB</span>, Google Earth Engine
        </div>
      </div>
    </div>
  );
}

/* ---------- Page ---------- */

export default function App() {
  return (
    <div className="h-[2270px] w-[3852px] overflow-hidden bg-white pt-[76px] pl-[112px] font-[Roboto] text-white">
      <div className="flex h-[2046px] w-[3628px] flex-col overflow-hidden rounded-[20px] bg-[#1a1a1a] shadow-[0_0_2px_1px_rgba(0,0,0,0.2),0_36px_94px_rgba(0,0,0,0.41)]">
        <Toolbar />
        <div className="flex min-h-0 flex-1">
          <Sidebar />
          <main className="flex min-w-0 flex-1 flex-col">
            <header className="flex h-24 shrink-0 items-center gap-16 bg-[#282725] pl-8 shadow-[0_4px_10px_rgba(0,0,0,0.6)]">
              <Icon d={ICONS.dots} />
              <h1 className="pt-0.5 text-[40px] leading-[60px] text-[#f4f4f4]">Tropical Moist Forest</h1>
            </header>
            <section className="mt-[76px] ml-[74px] h-[1358px] w-[2968px] rounded-lg bg-[#242424] shadow-[0_6px_18px_rgba(0,0,0,0.6)]">
              <div className="h-[110px] pt-10 pl-10">
                <h2 className="text-[40px] leading-[60px] font-bold tracking-[0.5px]">Select AOI</h2>
              </div>
              <div className="flex gap-12 pl-14">
                <AoiForm />
                <MapPanel />
              </div>
            </section>
          </main>
        </div>
      </div>
    </div>
  );
}
